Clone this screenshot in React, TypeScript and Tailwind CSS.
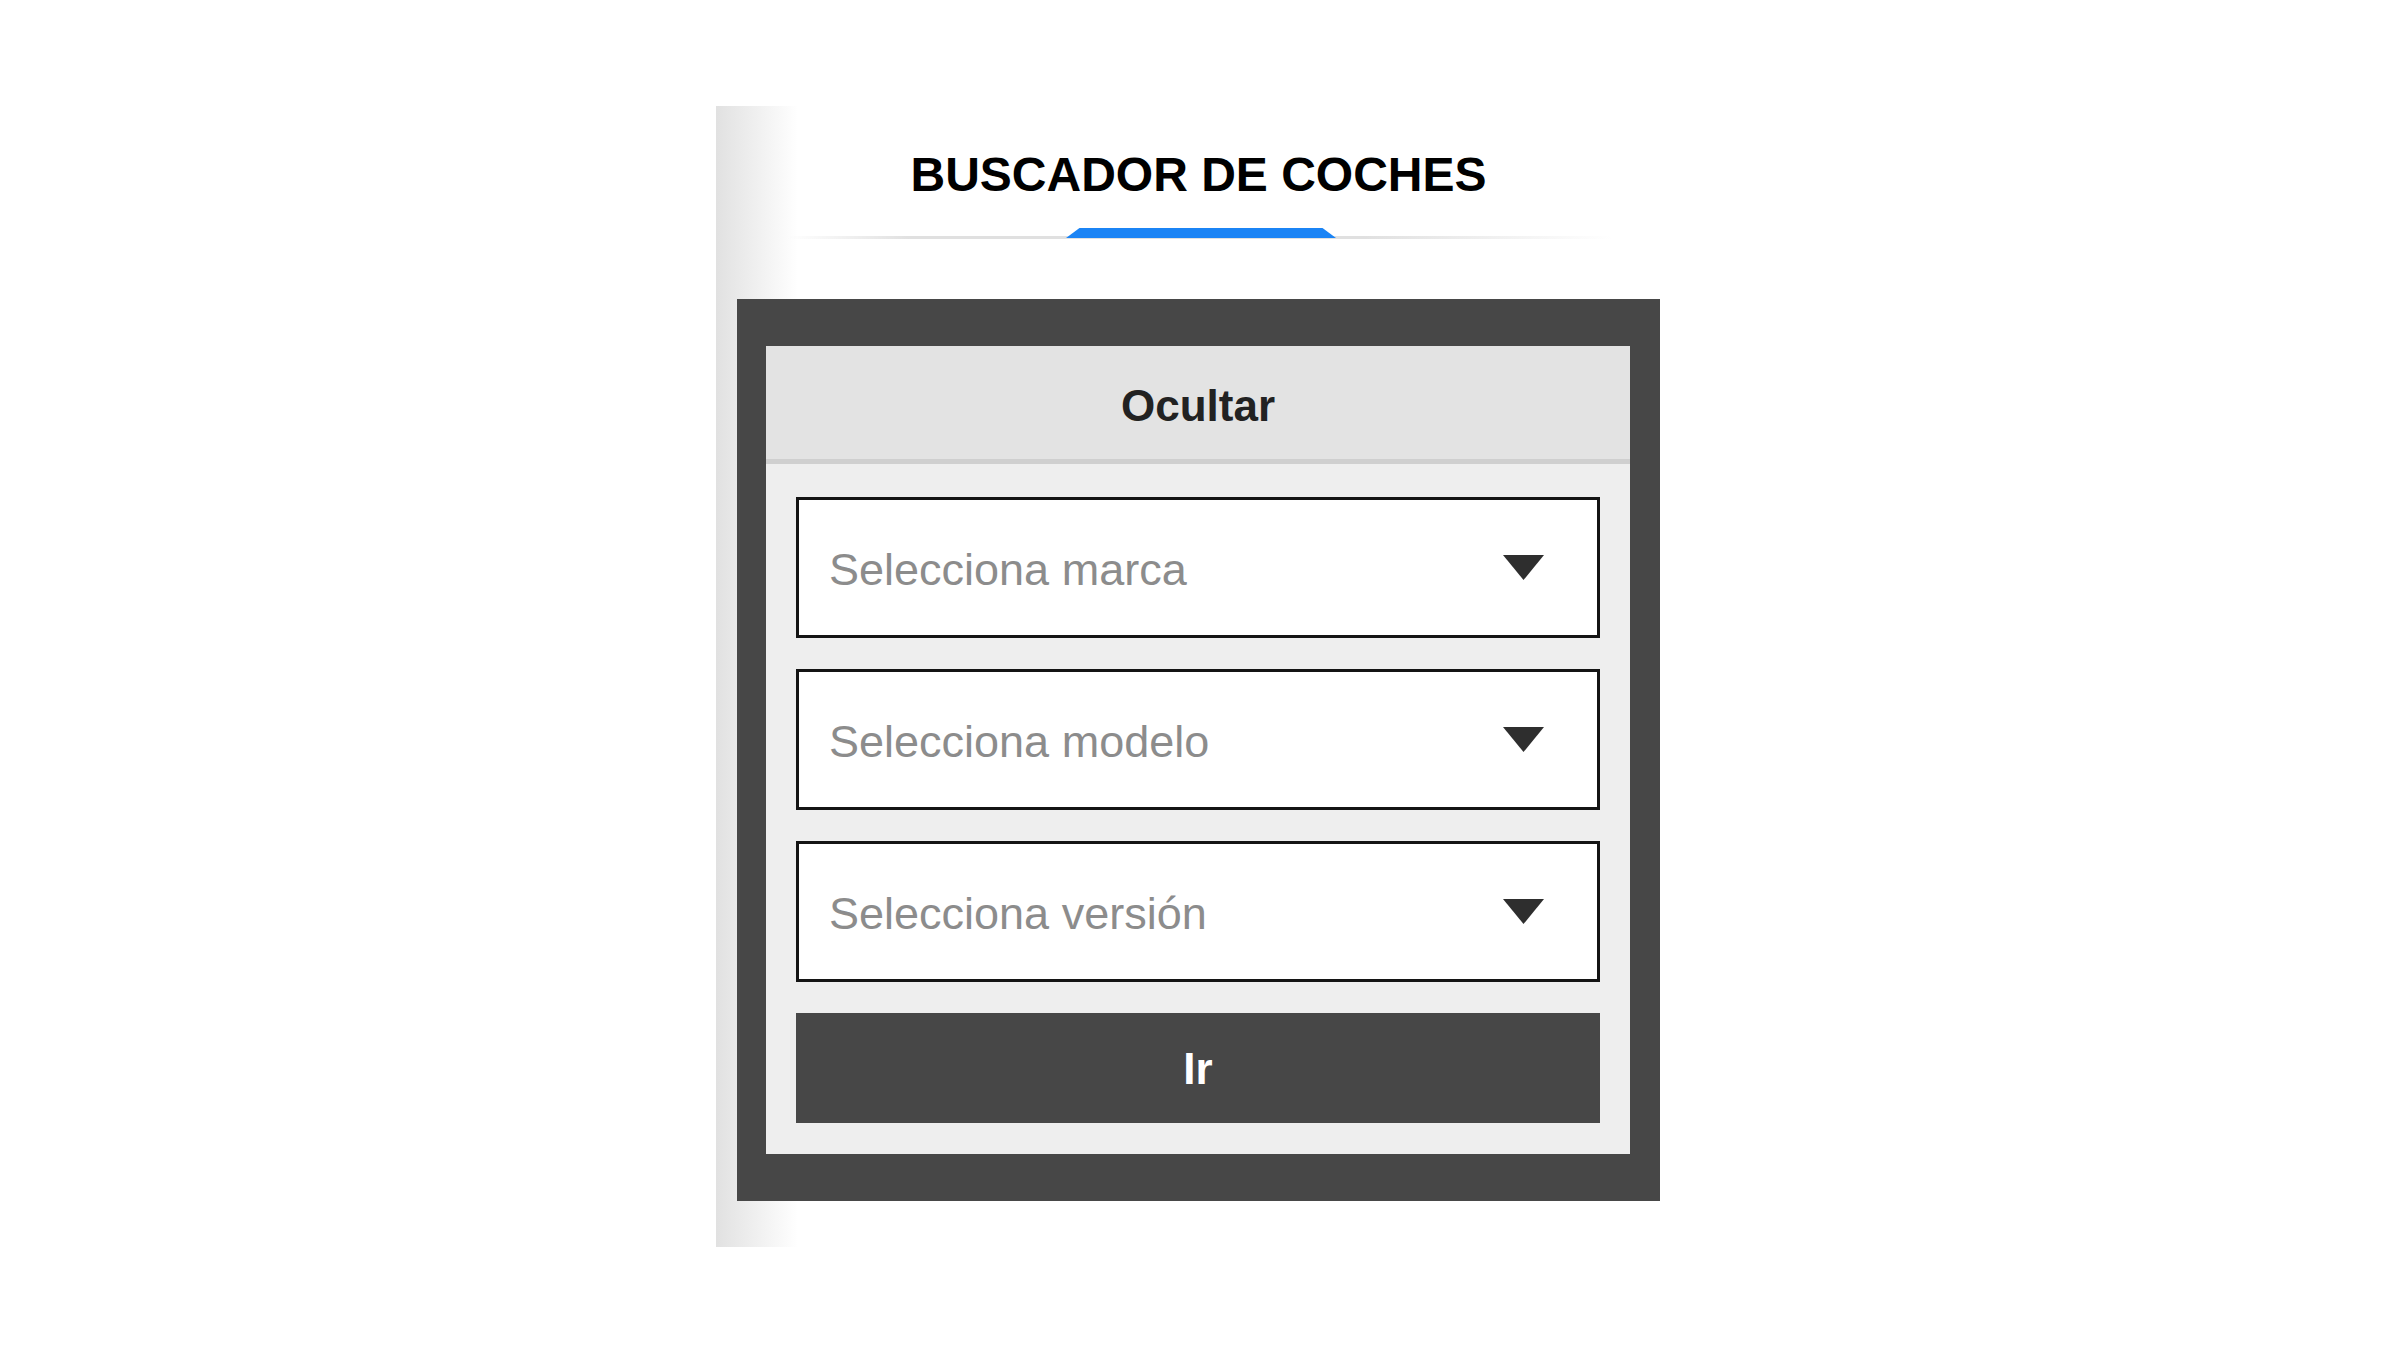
import React from 'react';

const fields = ['Selecciona marca', 'Selecciona modelo', 'Selecciona versión'];

const SelectBox: React.FC<{ label: string }> = ({ label }) => (
  <div className="flex h-[141px] items-center justify-between border-[3px] border-[#141414] bg-white pl-[30px] pr-[53px]">
    <span className="pt-[3px] text-[45px] leading-none text-[#8c8c8c]">{label}</span>
    <svg width="41" height="25" viewBox="0 0 41 25" className="shrink-0">
      <path d="M0 0 H41 L20.5 25 Z" fill="#2e2e2e" />
    </svg>
  </div>
);

export default function App() {
  return (
    <div className="min-h-[1352px] bg-white font-['Liberation_Sans',Arial,sans-serif]">
      <div className="ml-[716px] pt-[106px]">
        <div className="w-[980px] bg-[linear-gradient(to_right,#e1e1e1,#ffffff_82px)] pb-[46px]">
          {/* Title */}
          <div className="ml-[21px] w-[923px] pt-[45px]">
            <h1 className="text-center text-[48px] font-bold leading-none text-black">
              BUSCADOR DE COCHES
            </h1>
            <div className="relative mt-[29px] h-[11px]">
              <div className="absolute bottom-0 left-[51px] h-[3px] w-[824px] bg-[linear-gradient(to_right,rgba(224,224,224,0),#e0e0e0_15%,#e0e0e0_70%,rgba(224,224,224,0))]" />
              <div className="absolute bottom-[1px] left-[329px] h-[10px] w-[270px] bg-[#1b84f5] [clip-path:polygon(5%_0,95%_0,100%_100%,0_100%)]" />
            </div>
          </div>

          {/* Search panel */}
          <div className="ml-[21px] mt-[60px] w-[923px] bg-[#474747] pb-[47px] pl-[29px] pr-[30px] pt-[47px]">
            <div className="bg-[#eeeeee]">
              <div className="flex h-[118px] items-center justify-center border-b-[5px] border-[#cfcfcf] bg-[#e3e3e3]">
                <span className="pt-[6px] text-[44px] font-bold leading-none text-[#222222]">Ocultar</span>
              </div>
              <div className="flex flex-col gap-[31px] px-[30px] pb-[31px] pt-[33px]">
                {fields.map((f) => (
                  <SelectBox key={f} label={f} />
                ))}
                <button className="flex h-[110px] items-center justify-center bg-[#474747] pt-[2px] text-[44px] font-bold leading-none text-white">
                  Ir
                </button>
              </div>
            </div>
          </div>
        </div>
      </div>
    </div>
  );
}
